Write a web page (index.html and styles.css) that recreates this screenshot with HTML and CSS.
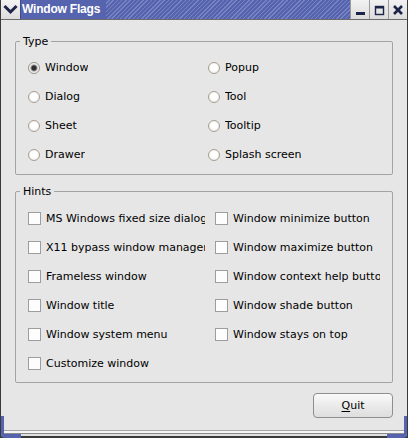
FILE: index.html
```html
<!DOCTYPE html>
<html>
<head>
<meta charset="utf-8">
<title>Window Flags</title>
<link rel="stylesheet" href="styles.css">
</head>
<body>
<div class="window">
  <div class="titlebar">
    <div class="tb-btn menu-btn">
      <svg width="19" height="19" viewBox="0 0 19 19"><path d="M4.5 7 L9.5 12 L14.5 7" fill="none" stroke="#1c2448" stroke-width="3" stroke-linecap="square"/></svg>
    </div>
    <div class="title-area"><span class="title-text">Window Flags</span></div>
    <div class="tb-btn">
      <svg width="18" height="19" viewBox="0 0 18 19"><rect x="5" y="12" width="9" height="3" fill="#1c2448"/></svg>
    </div>
    <div class="tb-btn">
      <svg width="18" height="19" viewBox="0 0 18 19"><rect x="5.5" y="6.5" width="8" height="8" fill="none" stroke="#1c2448" stroke-width="1.4"/><rect x="5" y="6" width="9" height="2.5" fill="#1c2448"/></svg>
    </div>
    <div class="tb-btn last">
      <svg width="18" height="19" viewBox="0 0 18 19"><path d="M5 6 L13 14 M13 6 L5 14" stroke="#1c2448" stroke-width="2.6"/></svg>
    </div>
  </div>

  <div class="client">
    <fieldset class="group type-group">
      <legend>Type</legend>
      <div class="type-grid">
        <label class="opt"><input type="radio" name="t" checked><span>Window</span></label>
        <label class="opt"><input type="radio" name="t"><span>Popup</span></label>
        <label class="opt"><input type="radio" name="t"><span>Dialog</span></label>
        <label class="opt"><input type="radio" name="t"><span>Tool</span></label>
        <label class="opt"><input type="radio" name="t"><span>Sheet</span></label>
        <label class="opt"><input type="radio" name="t"><span>Tooltip</span></label>
        <label class="opt"><input type="radio" name="t"><span>Drawer</span></label>
        <label class="opt"><input type="radio" name="t"><span>Splash screen</span></label>
      </div>
    </fieldset>

    <fieldset class="group hints-group">
      <legend>Hints</legend>
      <div class="hints-grid">
        <label class="opt"><input type="checkbox"><span>MS Windows fixed size dialog</span></label>
        <label class="opt"><input type="checkbox"><span>Window minimize button</span></label>
        <label class="opt"><input type="checkbox"><span>X11 bypass window manager</span></label>
        <label class="opt"><input type="checkbox"><span>Window maximize button</span></label>
        <label class="opt"><input type="checkbox"><span>Frameless window</span></label>
        <label class="opt"><input type="checkbox"><span>Window context help button</span></label>
        <label class="opt"><input type="checkbox"><span>Window title</span></label>
        <label class="opt"><input type="checkbox"><span>Window shade button</span></label>
        <label class="opt"><input type="checkbox"><span>Window system menu</span></label>
        <label class="opt"><input type="checkbox"><span>Window stays on top</span></label>
        <label class="opt"><input type="checkbox"><span>Customize window</span></label>
      </div>
    </fieldset>

    <div class="buttons">
      <button class="push"><u>Q</u>uit</button>
    </div>
  </div>

  <div class="bottom-frame"></div>
  <div class="corner corner-left"></div>
  <div class="corner corner-right"></div>
</div>
</body>
</html>
```

FILE: styles.css
```css
html, body {
  margin: 0;
  padding: 0;
  background: #e6e6e6;
}

.window {
  position: relative;
  width: 408px;
  height: 438px;
  box-sizing: border-box;
  display: flex;
  flex-direction: column;
  background: #e6e6e6;
  border-left: 1px solid #3a3a3a;
  border-right: 1px solid #3a3a3a;
  font-family: "DejaVu Sans", sans-serif;
  font-size: 11px;
  color: #000;
  overflow: hidden;
}

/* ---------- title bar ---------- */
.titlebar {
  display: flex;
  height: 20px;
  box-sizing: border-box;
  border-bottom: 1px solid #6b6b6b;
  flex: none;
}

.tb-btn {
  width: 18px;
  height: 19px;
  background: linear-gradient(#f2f2f2, #dcdcdc);
  border-left: 1px solid #9a9a9a;
  display: flex;
  align-items: center;
  justify-content: center;
}

.tb-btn svg { display: block; }

.menu-btn {
  width: 19px;
  border-left: none;
  border-right: 1px solid #3f4a86;
}

.tb-btn.last { width: 18px; }

.title-area {
  flex: 1;
  background: repeating-linear-gradient(135deg, #5664af 0 2px, #7884c2 2px 3px);
  display: flex;
  align-items: center;
}

.title-text {
  background: #5664af;
  height: 19px;
  line-height: 19px;
  padding: 0 6px 0 1px;
  color: #fff;
  font-family: "Liberation Sans", Arial, sans-serif;
  font-weight: bold;
  font-size: 12px;
  letter-spacing: -0.2px;
}

/* ---------- client ---------- */
.client {
  flex: 1;
  display: flex;
  flex-direction: column;
  padding: 15px 14px 0 14px;
}

.group {
  margin: 0;
  padding: 0;
  border: 1px solid #a3a3a3;
  border-radius: 2px;
  min-width: 0;
}

.group legend {
  margin-left: 4px;
  padding: 0 3px;
  line-height: 13px;
  height: 13px;
  font-size: 11px;
}

.hints-group { margin-top: 10px; }

.type-grid {
  display: grid;
  grid-template-columns: 180px 1fr;
  grid-auto-rows: 29px;
  padding: 5px 0 5px 12px;
}

.hints-grid {
  display: grid;
  grid-template-columns: 177px 165px;
  column-gap: 10px;
  grid-auto-rows: 29px;
  padding: 6px 0 4px 12px;
}

.opt {
  display: flex;
  align-items: center;
  gap: 5px;
  white-space: nowrap;
  overflow: hidden;
  min-width: 0;
}

.opt span {
  overflow: hidden;
}

.opt input {
  appearance: none;
  -webkit-appearance: none;
  margin: 0;
  flex: none;
}

.opt input[type="radio"] {
  width: 12px;
  height: 12px;
  border-radius: 50%;
  border: 1px solid #a89e90;
  box-sizing: border-box;
  background: radial-gradient(circle at 50% 45%, #ffffff 0 3px, #f1f1f1 5px);
}

.opt input[type="radio"]:checked {
  background: radial-gradient(circle at 50% 50%, #2f2f2f 0 2px, #7a7a7a 2.8px, #cfcfcf 3.6px, #f3f3f3 4.5px);
  border-color: #9a9188;
}

.opt input[type="checkbox"] {
  width: 13px;
  height: 13px;
  box-sizing: border-box;
  border: 1px solid #9d9d9d;
  background: #fdfdfd;
}

/* ---------- buttons ---------- */
.buttons {
  display: flex;
  justify-content: flex-end;
  margin-top: 10px;
}

.push {
  width: 80px;
  height: 25px;
  box-sizing: border-box;
  border: 1px solid #8e8e8e;
  border-radius: 4px;
  background: linear-gradient(#fafafa, #e8e8e8 60%, #dedede);
  font-family: "DejaVu Sans", sans-serif;
  font-size: 11px;
  color: #000;
  padding: 0;
}

.push u { text-underline-offset: 2px; }

/* ---------- frame ---------- */
.bottom-frame {
  flex: none;
  height: 8px;
  box-sizing: border-box;
  border-top: 1px solid #a6a6a6;
  background: linear-gradient(#f6f6f6 0 2px, #8a8a8a 2px 3px, #e0e0e0 3px 5px, #3a3a3a 5px);
}

.corner {
  position: absolute;
  bottom: 0;
  width: 20px;
  height: 22px;
  box-sizing: border-box;
  border-bottom: 4px solid #5664af;
}

.corner-left {
  left: 0;
  border-left: 3px solid #5664af;
  border-bottom-left-radius: 4px;
}

.corner-right {
  right: 0;
  border-right: 3px solid #5664af;
  border-bottom-right-radius: 4px;
}
```
